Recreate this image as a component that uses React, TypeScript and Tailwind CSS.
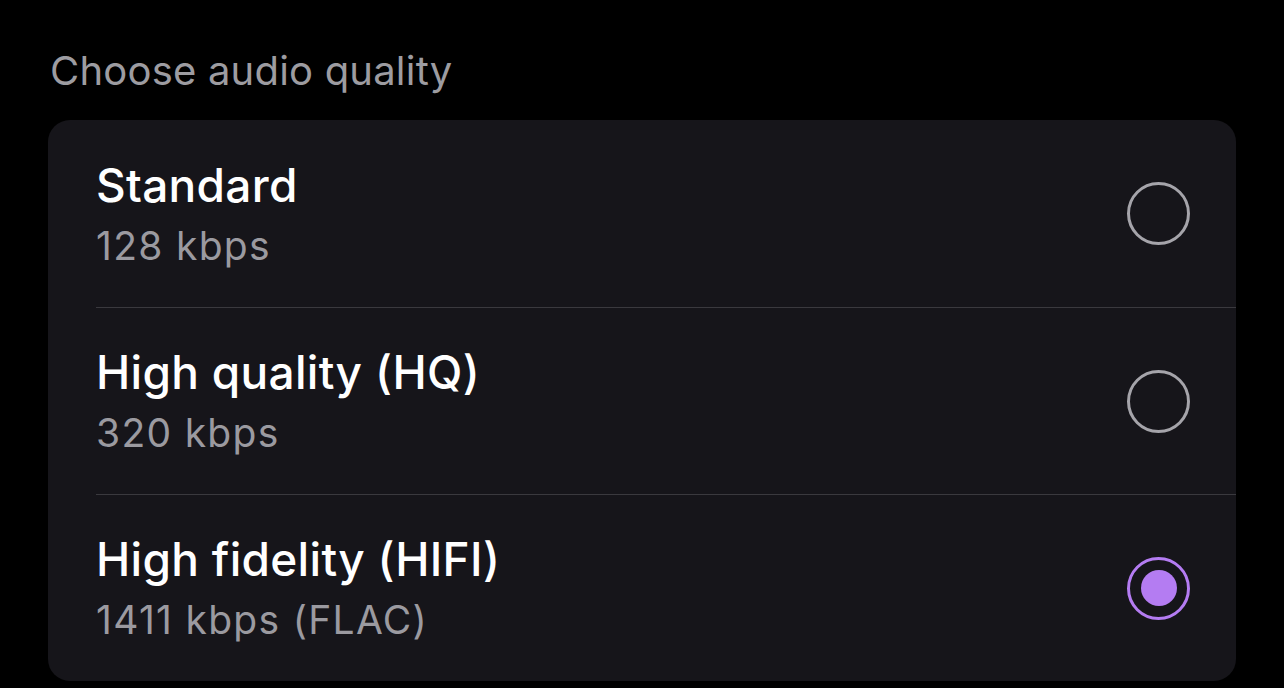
import { useState } from "react";

const options = [
  { id: "standard", title: "Standard", rate: "128 kbps" },
  { id: "hq", title: "High quality (HQ)", rate: "320 kbps" },
  { id: "hifi", title: "High fidelity (HIFI)", rate: "1411 kbps (FLAC)" },
];

function Radio({ checked }: { checked: boolean }) {
  return (
    <div
      className={`w-[63px] h-[63px] rounded-full border-[3px] flex items-center justify-center ${
        checked ? "border-[#b47cf2]" : "border-[#a5a4aa]"
      }`}
    >
      {checked && <div className="w-[36px] h-[36px] rounded-full bg-[#b47cf2]" />}
    </div>
  );
}

export default function App() {
  const [selected, setSelected] = useState("hifi");

  return (
    <div
      className="w-[1284px] h-[688px] bg-black overflow-hidden pl-[48px] pr-[48px] pt-[46px]"
      style={{ fontFamily: "Inter, 'Noto Sans', sans-serif" }}
    >
      <h2 className="pl-[2px] text-[40px] leading-[50px] text-[#9d9ca1] tracking-[0.2px]">Choose audio quality</h2>

      <div className="mt-[24px] bg-[#16151a] rounded-[22px] overflow-hidden">
        {options.map((opt, idx) => (
          <button
            key={opt.id}
            onClick={() => setSelected(opt.id)}
            className="w-full text-left pl-[48px] flex flex-col"
          >
            <div className={`flex items-center h-[187px] pr-[46px] ${idx > 0 ? "border-t border-[#3a393e]" : ""}`}>
              <div className="flex-1 pb-[1px]">
                <p className="text-[46px] leading-[56px] font-medium text-white tracking-[0.3px]">{opt.title}</p>
                <p className="mt-[9px] text-[39px] leading-[48px] text-[#9b9aa0] tracking-[1.3px]">{opt.rate}</p>
              </div>
              <Radio checked={selected === opt.id} />
            </div>
          </button>
        ))}
      </div>
    </div>
  );
}
